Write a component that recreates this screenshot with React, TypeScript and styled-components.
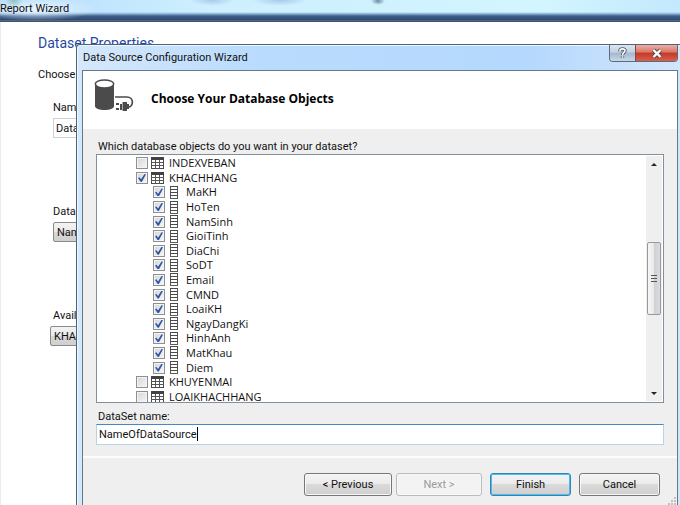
import React from "react";
import styled, { createGlobalStyle, css } from "styled-components";

const wideFont = '"Open Sans", "Noto Sans", sans-serif';

const GlobalStyle = createGlobalStyle`
  * { box-sizing: border-box; }
  html, body, #root { height: 100%; }
  body {
    margin: 0;
    overflow: hidden;
    background: #fff;
    color: #111;
    font: 11px/15px Roboto, "Open Sans", sans-serif;
  }
  button, input { font: inherit; color: inherit; }
`;

const Page = styled.div`
  position: relative;
  display: flex;
  flex-direction: column;
  height: 100%;
  overflow: hidden;
`;

const PageTitleBar = styled.header`
  height: 22px;
  flex: none;
  border-bottom: 1px solid #44546a;
  background:
    radial-gradient(ellipse 7px 4px at 378px 1px, #6f87a8 0%, transparent 100%),
    radial-gradient(ellipse 22px 6px at 212px 0, #a9c9ea 0%, transparent 100%),
    radial-gradient(ellipse 28px 6px at 280px 0, #a9c9ea 0%, transparent 100%),
    radial-gradient(ellipse 9px 8px at 14px 0, #8fc0bd 0%, transparent 100%),
    radial-gradient(ellipse 60px 12px at 36px 9px, #e9f5ff 0%, transparent 100%),
    linear-gradient(to bottom, transparent 0 12px, #84acd2 14px, #3f5f88 16px, #2e4a73 20px, #6b7f99 21px),
    linear-gradient(to right, #b5dbfb, #cdefff 30%, #d2f5ff 80%, #c4e8fd);
`;

const PageTitle = styled.h1`
  margin: 0;
  font-size: 11px;
  font-weight: 400;
  line-height: 17px;
`;

const PageBody = styled.main`
  flex: 1;
  display: flex;
  flex-direction: column;
  align-items: flex-start;
  padding: 10px 0 0 37px;
  border-left: 1px solid #ececec;
`;

const PageHeading = styled.h2`
  margin: 0;
  font-size: 14px;
  font-weight: 400;
  line-height: 22px;
  color: #1f4aa0;
`;

const PageHint = styled.p`
  margin: 13px 0 0;
`;

const PageField = styled.div<{ $gap: number; $indent: number }>`
  display: flex;
  flex-direction: column;
  align-items: flex-start;
  gap: 3px;
  margin-top: ${(p) => p.$gap}px;
  padding-left: ${(p) => p.$indent}px;
`;

const FieldLabel = styled.label<{ $inset?: number }>`
  padding-left: ${(p) => p.$inset ?? 0}px;
`;

const PageInput = styled.input`
  width: 220px;
  height: 20px;
  padding: 0 2px;
  border: 1px solid #cfd3da;
  background: #fff;
`;

const PagePicker = styled.button`
  width: 220px;
  height: 20px;
  padding: 0 3px;
  border: 1px solid #8a8a8a;
  border-radius: 2px;
  background: linear-gradient(#f3f3f3, #e9e9e9 50%, #d8d8d8 50%, #cfcfcf);
  text-align: left;
`;

const Dialog = styled.section`
  position: absolute;
  inset: 44px 0 0 76px;
  display: flex;
  flex-direction: column;
  padding: 0 2px 0 5px;
  border: solid #4f6478;
  border-width: 1px 0 0 1px;
  border-top-left-radius: 4px;
  background: linear-gradient(to right, #d5e8fb, #b9dbfd 30%, #b5d8fe 75%, #d2e6fa);
  box-shadow: inset 1px 1px 0 #eef7ff;
`;

const DialogBar = styled.header`
  display: flex;
  justify-content: space-between;
  align-items: flex-start;
  height: 25px;
  flex: none;
`;

const DialogTitle = styled.h2`
  margin: 0;
  padding-left: 1px;
  font-size: 11px;
  font-weight: 400;
  line-height: 26px;
`;

const CaptionButtons = styled.div`
  display: flex;
  border: 1px solid #5c6a7c;
  border-top: 0;
  border-radius: 0 0 4px 4px;
  overflow: hidden;
`;

const CaptionButton = styled.button<{ $close?: boolean }>`
  display: grid;
  place-items: center;
  width: ${(p) => (p.$close ? 42 : 25)}px;
  height: 16px;
  padding: 0;
  border: 0;
  background: linear-gradient(#dce5ef, #c5d2e2 45%, #a5b7ce 50%, #c8d8ea);
  ${(p) =>
    p.$close &&
    css`
      border-left: 1px solid #7a4a4a;
      background: linear-gradient(#eab0a4, #d97666 45%, #c3392a 50%, #d8604a);
    `}
`;

const DialogFrame = styled.div`
  flex: 1;
  min-height: 0;
  display: flex;
  flex-direction: column;
  border: solid #66788a;
  border-width: 1px 1px 0 1px;
  background: #efefef;
`;

const Banner = styled.div`
  display: flex;
  align-items: flex-start;
  gap: 17px;
  height: 58px;
  flex: none;
  padding: 7px 11px;
  background: #fff;
`;

const BannerTitle = styled.h3`
  margin: 0;
  font-family: ${wideFont};
  font-size: 12px;
  line-height: 42px;
  font-weight: 700;
  color: #000;
`;

const Content = styled.div`
  display: flex;
  flex-direction: column;
  padding: 10px 13px 11px;
  border-bottom: 2px solid #fdfdfd;
`;

const Question = styled.p`
  margin: 0;
  padding-left: 2px;
`;

const TreeBox = styled.div`
  display: flex;
  height: 249px;
  padding: 1px;
  border: 1px solid #828f9c;
  background: #fff;
  overflow: hidden;
`;

const Tree = styled.ul`
  flex: 1;
  display: grid;
  grid-auto-rows: 1fr;
  height: 248px;
  margin: 0;
  padding: 0;
  font-family: ${wideFont};
  list-style: none;
`;

const TreeItem = styled.li<{ $level: number }>`
  display: flex;
  align-items: center;
  min-height: 0;
  padding-left: ${(p) => (p.$level === 0 ? 38 : 55)}px;
`;

const TreeLabel = styled.label<{ $level: number }>`
  display: grid;
  grid-template-columns: ${(p) => (p.$level === 0 ? "12px 13px auto" : "12px 8px auto")};
  column-gap: ${(p) => (p.$level === 0 ? 3 : 5)}px;
  align-items: center;
  line-height: 14px;
`;

const TreeText = styled.span<{ $level: number }>`
  padding-left: ${(p) => (p.$level === 0 ? 2 : 3)}px;
`;

const Tick = styled.input`
  appearance: none;
  display: grid;
  place-items: center;
  width: 12px;
  height: 12px;
  margin: 0;
  border: 1px solid #8e8f8f;
  background: linear-gradient(135deg, #d3d5d9, #f7f7f7);
  box-shadow: inset 0 0 0 1px #f4f4f4;

  &:checked::after {
    content: "";
    width: 8px;
    height: 8px;
    background: #2f55a4;
    clip-path: polygon(0 50%, 18% 42%, 38% 68%, 82% 0, 100% 4%, 48% 100%, 34% 100%);
  }
`;

const ScrollTrack = styled.div`
  display: flex;
  flex-direction: column;
  align-items: center;
  width: 16px;
  padding: 7px 0 6px;
  background: #efefef;
`;

const Spacer = styled.div<{ $grow: number }>`
  flex: ${(p) => p.$grow} 1 0;
`;

const ScrollThumb = styled.div`
  display: grid;
  place-content: center;
  gap: 1px;
  width: 14px;
  height: 73px;
  border: 1px solid #999;
  border-radius: 2px;
  background: linear-gradient(to right, #f6f6f6, #e9e9eb 50%, #cfcfd4 50%, #dcdcdf);
`;

const Grip = styled.span`
  width: 6px;
  height: 2px;
  border-top: 1px solid #555;
`;

const NameLabel = styled.label`
  margin: 6px 0 0;
  padding-left: 2px;
`;

const NameBox = styled.div`
  position: relative;
  display: flex;
`;

const NameInput = styled.input`
  flex: 1;
  min-width: 0;
  height: 21px;
  padding: 0 2px 1px;
  border: 1px solid #b5d3ea;
  border-top-color: #4a86c5;
  background: #fff;
  outline: none;
`;

const Caret = styled.span`
  position: absolute;
  left: 101px;
  top: 3px;
  width: 1px;
  height: 14px;
  background: #000;
`;

const Actions = styled.footer`
  display: flex;
  justify-content: flex-end;
  gap: 8px;
  padding: 15px 17px 0 0;
`;

const ActionGroup = styled.div`
  display: flex;
  gap: 4px;
`;

const ActionButton = styled.button<{ $width: number; $primary?: boolean }>`
  width: ${(p) => p.$width}px;
  height: 23px;
  padding: 0;
  border: 1px solid #777;
  border-radius: 3px;
  background: linear-gradient(#f3f3f3, #ebebeb 50%, #dadada 50%, #cfcfcf);
  box-shadow: inset 0 0 0 1px #f7f7f7;

  ${(p) =>
    p.$primary &&
    css`
      border-color: #3c7fb1;
      box-shadow: inset 0 0 0 1px #45c0ee;
    `}

  &:disabled {
    border-color: #b8bcbf;
    background: #f3f3f3;
    color: #9a9a9a;
  }
`;

const ResizeGrip = styled.svg`
  position: absolute;
  right: 4px;
  bottom: 0;
`;

function DatabaseIcon() {
  return (
    <svg width="40" height="36" viewBox="0 0 40 36" aria-hidden="true">
      <path d="M1 6v22c0 5.300 19 5.300 19 0V6z" fill="#4b4b4b" />
      <ellipse cx="10.500" cy="6" rx="9.200" ry="4" fill="#fff" stroke="#4b4b4b" strokeWidth="1.500" />
      <path d="M21 19h12c7 0 7 10 1 10h-1" fill="none" stroke="#4b4b4b" strokeWidth="1.700" />
      <path d="M26 26h2v-2h5v9h-5v-1h-2zM22 25h3v2h-3zM22 30h3v2h-3zM33 26h2v5h-2z" fill="#4b4b4b" />
      <path d="M28.500 24v9" stroke="#aaa" strokeWidth="1" />
    </svg>
  );
}

function TableIcon() {
  return (
    <svg width="13" height="12" viewBox="0 0 13 12" shapeRendering="crispEdges" aria-hidden="true">
      <rect x="0.500" y="0.500" width="12" height="11" fill="#fff" stroke="#4a4a4a" />
      <rect width="13" height="3" fill="#424242" />
      <path d="M4.500 3v9M8.500 3v9M0 5.500h13M0 8.500h13" stroke="#555" fill="none" />
    </svg>
  );
}

function ColumnIcon() {
  return (
    <svg width="8" height="13" viewBox="0 0 8 13" shapeRendering="crispEdges" aria-hidden="true">
      <rect x="0.500" y="0.500" width="7" height="12" fill="#fff" stroke="#5a5a5a" />
      <path d="M0 0.500h8M0 3.500h8M0 6.500h8M0 9.500h8" stroke="#4a4a4a" fill="none" />
    </svg>
  );
}

function ScrollArrow({ down }: { down?: boolean }) {
  return (
    <svg width="6" height="3" viewBox="0 0 6 3" aria-hidden="true">
      <path d={down ? "M0 0h6L3 3z" : "M0 3h6L3 0z"} fill="#222" />
    </svg>
  );
}

type Node = { name: string; level: number; checked: boolean };

const columns = [
  "MaKH", "HoTen", "NamSinh", "GioiTinh", "DiaChi", "SoDT", "Email",
  "CMND", "LoaiKH", "NgayDangKi", "HinhAnh", "MatKhau", "Diem",
];

const nodes: Node[] = [
  { name: "INDEXVEBAN", level: 0, checked: false },
  { name: "KHACHHANG", level: 0, checked: true },
  ...columns.map((name) => ({ name, level: 1, checked: true })),
  { name: "KHUYENMAI", level: 0, checked: false },
  { name: "LOAIKHACHHANG", level: 0, checked: false },
];

export default function App() {
  return (
    <Page>
      <GlobalStyle />
      <PageTitleBar>
        <PageTitle>Report Wizard</PageTitle>
      </PageTitleBar>
      <PageBody>
        <PageHeading>Dataset Properties</PageHeading>
        <PageHint>Choose</PageHint>
        <PageField $gap={18} $indent={15}>
          <FieldLabel htmlFor="page-name">Name</FieldLabel>
          <PageInput id="page-name" defaultValue="Data" />
        </PageField>
        <PageField $gap={66} $indent={15}>
          <FieldLabel htmlFor="page-source">Data</FieldLabel>
          <PagePicker id="page-source" type="button">Name</PagePicker>
        </PageField>
        <PageField $gap={66} $indent={12}>
          <FieldLabel htmlFor="page-sets" $inset={3}>Availa</FieldLabel>
          <PagePicker id="page-sets" type="button">KHAC</PagePicker>
        </PageField>
      </PageBody>

      <Dialog role="dialog" aria-labelledby="dialog-title">
        <DialogBar>
          <DialogTitle id="dialog-title">Data Source Configuration Wizard</DialogTitle>
          <CaptionButtons>
            <CaptionButton type="button" aria-label="Help">
              <svg width="9" height="12" viewBox="0 0 9 12" aria-hidden="true">
                <path d="M2 4.500V3.500C2 1.300 7 1.300 7 3.800C7 5.500 4.500 5.500 4.500 8M4.500 9.200v1.500" fill="none" stroke="#4b5665" strokeWidth="3.400" />
                <path d="M2 4.500V3.500C2 1.300 7 1.300 7 3.800C7 5.500 4.500 5.500 4.500 8M4.500 9.200v1.500" fill="none" stroke="#fff" strokeWidth="1.600" />
              </svg>
            </CaptionButton>
            <CaptionButton type="button" aria-label="Close" $close>
              <svg width="12" height="11" viewBox="0 0 12 11" aria-hidden="true">
                <path d="M2.500 2l7 7M9.500 2l-7 7" stroke="#5a4b50" strokeWidth="4.200" />
                <path d="M2.500 2l7 7M9.500 2l-7 7" stroke="#fff" strokeWidth="2.400" />
              </svg>
            </CaptionButton>
          </CaptionButtons>
        </DialogBar>
        <DialogFrame>
          <Banner>
            <DatabaseIcon />
            <BannerTitle>Choose Your Database Objects</BannerTitle>
          </Banner>
          <Content>
            <Question>Which database objects do you want in your dataset?</Question>
            <TreeBox>
              <Tree>
                {nodes.map(({ name, level, checked }) => (
                  <TreeItem key={name} $level={level}>
                    <TreeLabel $level={level}>
                      <Tick type="checkbox" defaultChecked={checked} />
                      {level === 0 ? <TableIcon /> : <ColumnIcon />}
                      <TreeText $level={level}>{name}</TreeText>
                    </TreeLabel>
                  </TreeItem>
                ))}
              </Tree>
              <ScrollTrack>
                <ScrollArrow />
                <Spacer $grow={77} />
                <ScrollThumb>
                  <Grip />
                  <Grip />
                  <Grip />
                </ScrollThumb>
                <Spacer $grow={78} />
                <ScrollArrow down />
              </ScrollTrack>
            </TreeBox>
            <NameLabel htmlFor="dataset-name">DataSet name:</NameLabel>
            <NameBox>
              <NameInput id="dataset-name" defaultValue="NameOfDataSource" />
              <Caret />
            </NameBox>
          </Content>
          <Actions>
            <ActionGroup>
              <ActionButton type="button" $width={88}>&lt; Previous</ActionButton>
              <ActionButton type="button" $width={86} disabled>Next &gt;</ActionButton>
            </ActionGroup>
            <ActionButton type="button" $width={81} $primary>Finish</ActionButton>
            <ActionButton type="button" $width={81}>Cancel</ActionButton>
          </Actions>
        </DialogFrame>
        <ResizeGrip width="8" height="8" viewBox="0 0 8 8" aria-hidden="true">
          <path d="M6 0h2v2H6zM3 3h2v2H3zM6 3h2v2H6zM0 6h2v2H0zM3 6h2v2H3zM6 6h2v2H6z" fill="#c2c2c2" />
        </ResizeGrip>
      </Dialog>
    </Page>
  );
}
